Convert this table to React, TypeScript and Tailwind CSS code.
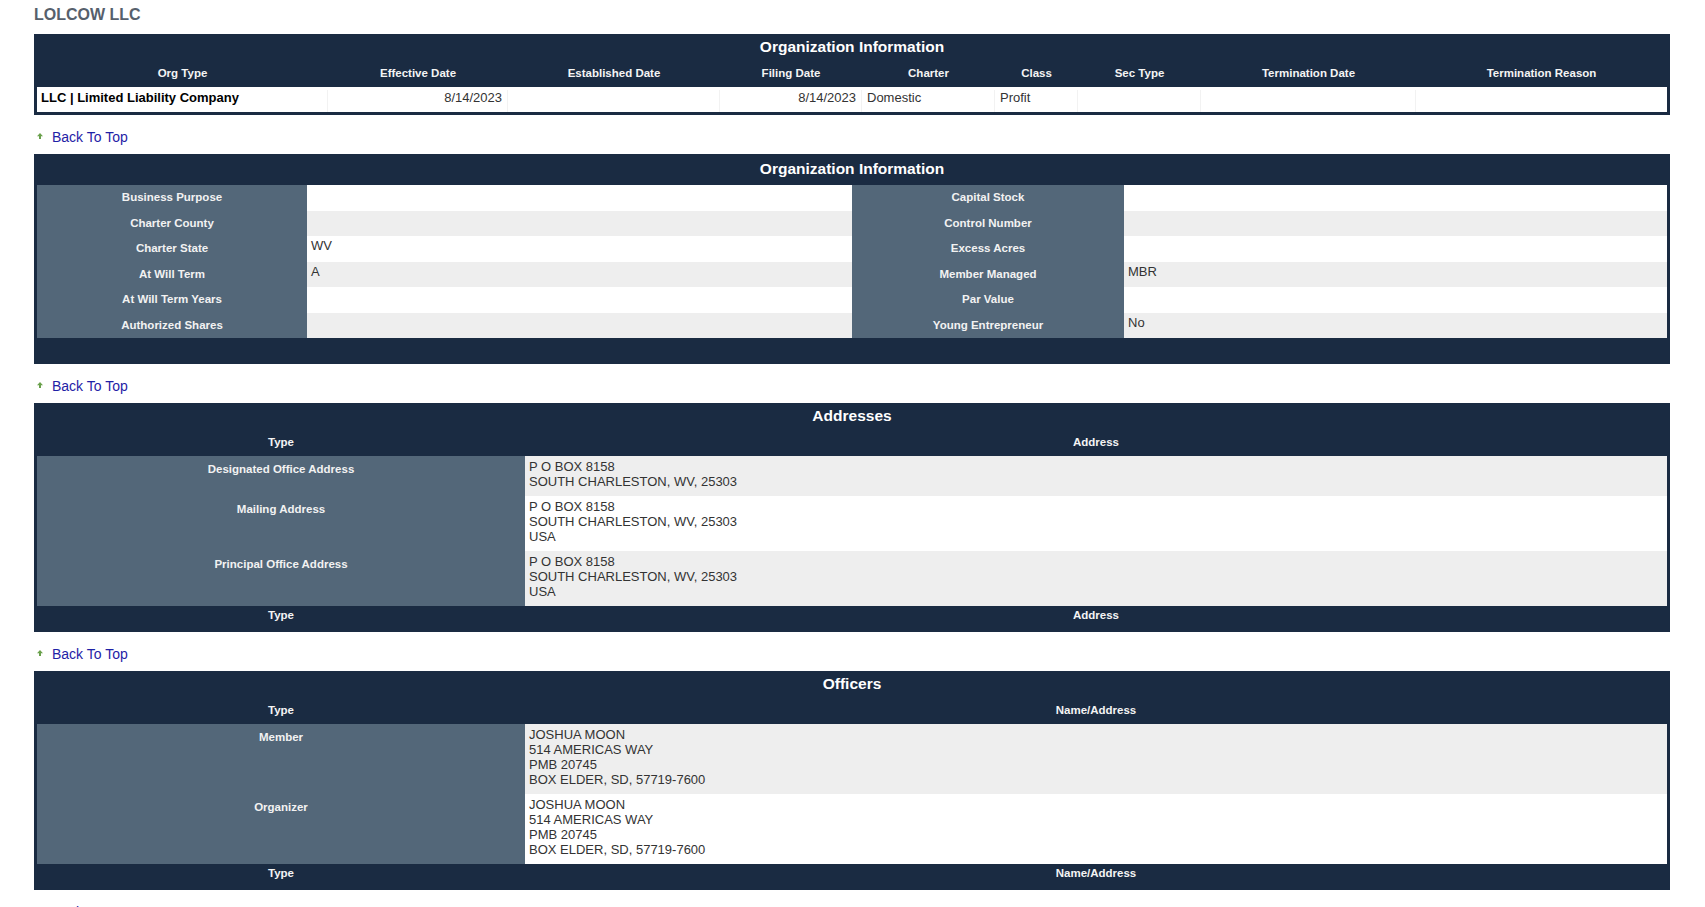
import React from "react";

/* ── shared bits ─────────────────────────────────────────────────────────── */
function BackToTop() {
  return (
    <div className="mt-[14px] mb-[9px] flex h-[16px] items-center pl-[3px]">
      <svg width="6" height="6" viewBox="0 0 6 6" className="mr-[9px] -mt-[2px]">
        <path d="M3 0 L6 3.2 H4 V6 H2 V3.2 H0 Z" fill="#6aa14c" />
      </svg>
      <a href="#top" className="text-[14px] leading-[16px] text-[#1f22a6]">
        Back To Top
      </a>
    </div>
  );
}

function TitleRow({ title, h = "h-[26px]" }: { title: string; h?: string }) {
  return (
    <div className={`${h} flex items-center justify-center text-[15.5px] font-bold text-white`}>
      {title}
    </div>
  );
}

/* ── data ────────────────────────────────────────────────────────────────── */
const orgCols = [
  "Org Type",
  "Effective Date",
  "Established Date",
  "Filing Date",
  "Charter",
  "Class",
  "Sec Type",
  "Termination Date",
  "Termination Reason",
];

const details: [string, string, string, string][] = [
  ["Business Purpose", "", "Capital Stock", ""],
  ["Charter County", "", "Control Number", ""],
  ["Charter State", "WV", "Excess Acres", ""],
  ["At Will Term", "A", "Member Managed", "MBR"],
  ["At Will Term Years", "", "Par Value", ""],
  ["Authorized Shares", "", "Young Entrepreneur", "No"],
];

const addresses = [
  { type: "Designated Office Address", lines: ["P O BOX 8158", "SOUTH CHARLESTON, WV, 25303"] },
  { type: "Mailing Address", lines: ["P O BOX 8158", "SOUTH CHARLESTON, WV, 25303", "USA"] },
  { type: "Principal Office Address", lines: ["P O BOX 8158", "SOUTH CHARLESTON, WV, 25303", "USA"] },
];

const officers = [
  { type: "Member", lines: ["JOSHUA MOON", "514 AMERICAS WAY", "PMB 20745", "BOX ELDER, SD, 57719-7600"] },
  { type: "Organizer", lines: ["JOSHUA MOON", "514 AMERICAS WAY", "PMB 20745", "BOX ELDER, SD, 57719-7600"] },
];

/* ── two-column list table (addresses / officers) ────────────────────────── */
function ListTable({
  title,
  right,
  rows,
}: {
  title: string;
  right: string;
  rows: { type: string; lines: string[] }[];
}) {
  return (
    <section className="bg-[#1a2b42] px-[3px]">
      <TitleRow title={title} />
      <div className="grid h-[27px] grid-cols-[488px_1fr] items-center text-center text-[11.5px] font-bold text-[#f4f4f4]">
        <div>Type</div>
        <div>{right}</div>
      </div>
      <div className="grid grid-cols-[488px_1fr]">
        {rows.map((r, i) => (
          <React.Fragment key={r.type}>
            <div className="bg-[#536779] pt-[6px] text-center text-[11.5px] font-bold leading-[14px] text-[#f2f2f2]">
              {r.type}
            </div>
            <div
              className={`${i % 2 === 0 ? "bg-[#eeeeee]" : "bg-white"} pt-[3px] pb-[7px] pl-[4px] text-[13px] leading-[15px] text-[#333333]`}
            >
              {r.lines.map((l) => (
                <div key={l}>{l}</div>
              ))}
            </div>
          </React.Fragment>
        ))}
      </div>
      <div className="grid h-[26px] grid-cols-[488px_1fr] items-center pb-[6px] text-center text-[11.5px] font-bold text-[#f4f4f4]">
        <div>Type</div>
        <div>{right}</div>
      </div>
    </section>
  );
}

export default function App() {
  return (
    <div
      id="top"
      className="min-h-screen bg-white pl-[34px] pr-[35px] pt-[6px] text-[13px] text-[#333333]"
      style={{ fontFamily: '"Liberation Sans", Arial, sans-serif' }}
    >
      <h1 className="mb-[10px] text-[16px] font-bold leading-[18px] text-[#56606c]">LOLCOW LLC</h1>

      {/* Organization summary */}
      <section className="bg-[#1a2b42] px-[3px] pb-[3px]">
        <TitleRow title="Organization Information" />
        <div className="grid h-[27px] grid-cols-[291px_180px_212px_142px_133px_83px_123px_215px_1fr] items-center text-center text-[11.5px] font-bold text-[#f4f4f4]">
          {orgCols.map((c) => (
            <div key={c}>{c}</div>
          ))}
        </div>
        <div className="grid h-[25px] grid-cols-[291px_180px_212px_142px_133px_83px_123px_215px_1fr] bg-white pt-[3px] text-[13px] leading-[15px]">
          <div className="border-r border-[#f2f2f2] pl-[4px] font-bold text-black">LLC | Limited Liability Company</div>
          <div className="border-r border-[#f2f2f2] pr-[5px] text-right">8/14/2023</div>
          <div className="border-r border-[#f2f2f2]" />
          <div className="border-r border-[#f2f2f2] pr-[5px] text-right">8/14/2023</div>
          <div className="border-r border-[#f2f2f2] pl-[5px]">Domestic</div>
          <div className="border-r border-[#f2f2f2] pl-[5px]">Profit</div>
          <div className="border-r border-[#f2f2f2]" />
          <div className="border-r border-[#f2f2f2]" />
          <div />
        </div>
      </section>

      <BackToTop />

      {/* Organization details */}
      <section className="bg-[#1a2b42] px-[3px]">
        <TitleRow title="Organization Information" h="h-[31px] pb-[2px]" />
        <div className="grid grid-cols-[270px_545px_272px_1fr]">
          {details.map((r, i) => {
            const bg = i % 2 === 0 ? "bg-white" : "bg-[#eeeeee]";
            return (
              <React.Fragment key={r[0]}>
                <div className="flex h-[25.5px] items-center justify-center bg-[#536779] text-[11.5px] font-bold text-[#f2f2f2]">
                  {r[0]}
                </div>
                <div className={`${bg} pl-[4px] pt-[2px] text-[13px] leading-[15px]`}>{r[1]}</div>
                <div className="flex h-[25.5px] items-center justify-center bg-[#536779] text-[11.5px] font-bold text-[#f2f2f2]">
                  {r[2]}
                </div>
                <div className={`${bg} pl-[4px] pt-[2px] text-[13px] leading-[15px]`}>{r[3]}</div>
              </React.Fragment>
            );
          })}
        </div>
        <div className="h-[26px]" />
      </section>

      <BackToTop />

      <ListTable title="Addresses" right="Address" rows={addresses} />

      <BackToTop />

      <ListTable title="Officers" right="Name/Address" rows={officers} />

      <BackToTop />
    </div>
  );
}
